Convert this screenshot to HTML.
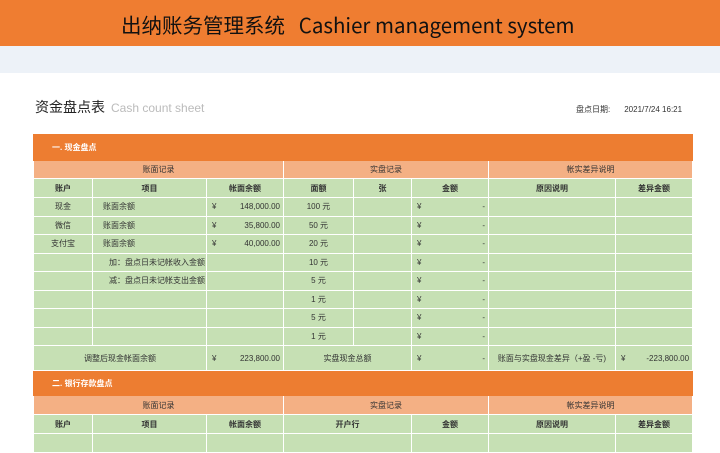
<!DOCTYPE html>
<html><head><meta charset="utf-8"><style>
*{margin:0;padding:0;box-sizing:border-box}
body{width:720px;height:438px;overflow:hidden;background:#fff;font-family:"Liberation Sans","Noto Sans CJK SC",sans-serif;position:relative}
.top{position:absolute;left:0;top:0;width:720px;height:46px;background:#ef7d31}
.top div{position:absolute;left:121px;top:9px;font-size:20.5px;color:#111;white-space:nowrap;font-family:"Noto Sans CJK SC","Liberation Sans",sans-serif}
.band{position:absolute;left:0;top:46px;width:720px;height:27px;background:#edf2f8}
.title{position:absolute;left:35px;top:97px;font-size:14px;color:#222;font-family:"Noto Sans CJK SC",sans-serif}
.title span{font-size:12px;color:#bbb;margin-left:6px;font-family:"Liberation Sans","Noto Sans CJK SC",sans-serif}
.date{position:absolute;left:576px;top:104px;font-size:8px;color:#333}
.date span{margin-left:14px}
table{position:absolute;left:33px;top:134px;width:659px;border-collapse:collapse;table-layout:fixed;font-size:8px;color:#333}
td{border:1px solid #fff;background:#c6e0b4;text-align:center;overflow:hidden;white-space:nowrap;padding:0 3px}
tr.sec td{background:#ed7d31;color:#fff;text-align:left;padding-left:18px;font-weight:bold;border-color:#ed7d31}
tr.sub td{background:#f4b084}
tr.h td{font-weight:bold}
td.l{text-align:left;padding-left:10px}
.y{float:left;padding-left:2px}
.v{float:right}
</style></head><body>
<div class="top"><div>出纳账务管理系统&nbsp;&nbsp; Cashier management system</div></div>
<div class="band"></div>
<div class="title">资金盘点表<span>Cash count sheet</span></div>
<div class="date">盘点日期:<span>2021/7/24 16:21</span></div>
<table>
<colgroup><col style="width:59px"><col style="width:114px"><col style="width:77px"><col style="width:70px"><col style="width:58px"><col style="width:77px"><col style="width:127px"><col style="width:77px"></colgroup>
<tr class="sec" style="height:26px"><td colspan="8">一. 现金盘点</td></tr>
<tr class="sub" style="height:18px"><td colspan="3">账面记录</td><td colspan="3">实盘记录</td><td colspan="2">帐实差异说明</td></tr>
<tr class="h" style="height:19px"><td>账户</td><td>项目</td><td>帐面余额</td><td>面额</td><td>张</td><td>金额</td><td>原因说明</td><td>差异金额</td></tr>
<tr style="height:18.5px"><td>现金</td><td class="l">账面余额</td><td><span class="y">¥</span><span class="v">148,000.00</span></td><td>100 元</td><td></td><td><span class="y">¥</span><span class="v">-</span></td><td></td><td></td></tr>
<tr style="height:18.5px"><td>微信</td><td class="l">账面余额</td><td><span class="y">¥</span><span class="v">35,800.00</span></td><td>50 元</td><td></td><td><span class="y">¥</span><span class="v">-</span></td><td></td><td></td></tr>
<tr style="height:18.5px"><td>支付宝</td><td class="l">账面余额</td><td><span class="y">¥</span><span class="v">40,000.00</span></td><td>20 元</td><td></td><td><span class="y">¥</span><span class="v">-</span></td><td></td><td></td></tr>
<tr style="height:18.5px"><td></td><td class="l" style="padding-left:16px">加：盘点日未记帐收入金额</td><td></td><td>10 元</td><td></td><td><span class="y">¥</span><span class="v">-</span></td><td></td><td></td></tr>
<tr style="height:18.5px"><td></td><td class="l" style="padding-left:16px">减：盘点日未记帐支出金额</td><td></td><td>5 元</td><td></td><td><span class="y">¥</span><span class="v">-</span></td><td></td><td></td></tr>
<tr style="height:18.5px"><td></td><td></td><td></td><td>1 元</td><td></td><td><span class="y">¥</span><span class="v">-</span></td><td></td><td></td></tr>
<tr style="height:18.5px"><td></td><td></td><td></td><td>5 元</td><td></td><td><span class="y">¥</span><span class="v">-</span></td><td></td><td></td></tr>
<tr style="height:18.5px"><td></td><td></td><td></td><td>1 元</td><td></td><td><span class="y">¥</span><span class="v">-</span></td><td></td><td></td></tr>
<tr style="height:25px"><td colspan="2">调整后现金帐面余额</td><td><span class="y">¥</span><span class="v">223,800.00</span></td><td colspan="2">实盘现金总额</td><td><span class="y">¥</span><span class="v">-</span></td><td>账面与实盘现金差异（+盈 -亏)</td><td><span class="y">¥</span><span class="v">-223,800.00</span></td></tr>
<tr class="sec" style="height:25px"><td colspan="8">二. 银行存款盘点</td></tr>
<tr class="sub" style="height:19px"><td colspan="3">账面记录</td><td colspan="3">实盘记录</td><td colspan="2">帐实差异说明</td></tr>
<tr class="h" style="height:19px"><td>账户</td><td>项目</td><td>帐面余额</td><td colspan="2">开户行</td><td>金额</td><td>原因说明</td><td>差异金额</td></tr>
<tr style="height:19px"><td></td><td></td><td></td><td colspan="2"></td><td></td><td></td><td></td></tr>
</table>
</body></html>
